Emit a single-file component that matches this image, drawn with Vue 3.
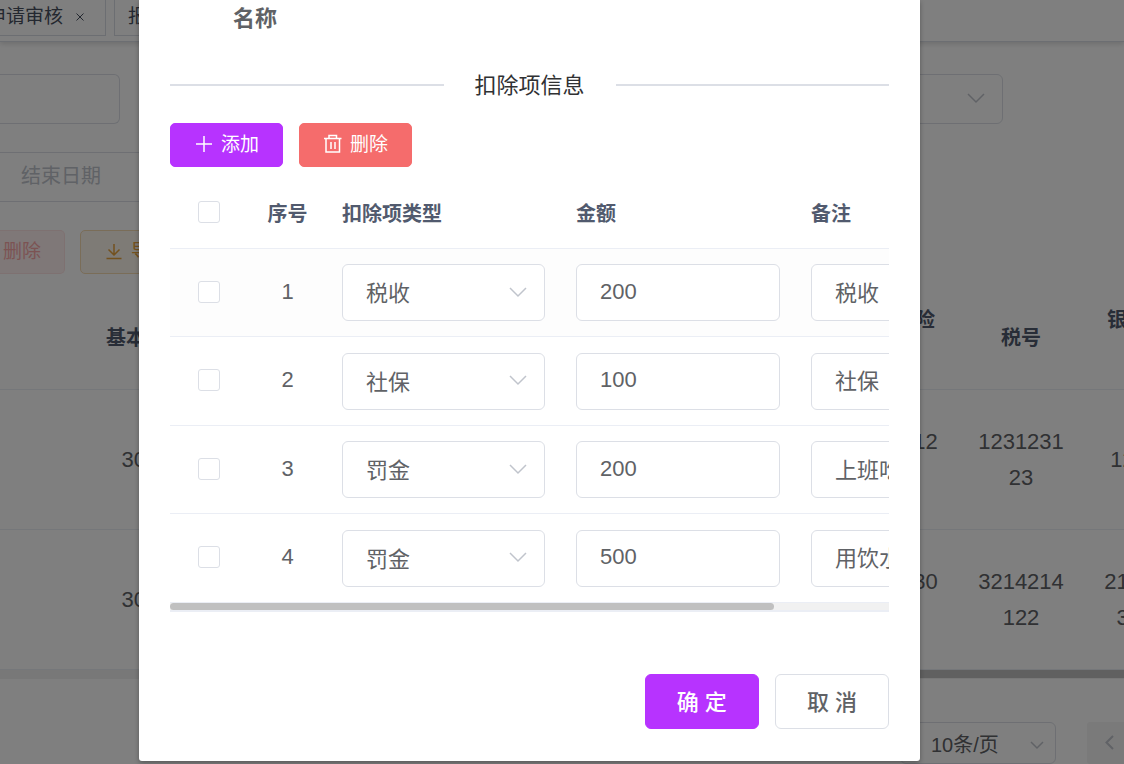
<script setup>
import { ref } from 'vue'

const typeOptions = ['税收', '社保', '罚金']

const deductions = ref([
  { id: 1, type: '税收', amount: '200', remark: '税收', checked: false },
  { id: 2, type: '社保', amount: '100', remark: '社保', checked: false },
  { id: 3, type: '罚金', amount: '200', remark: '上班吃饭', checked: false },
  { id: 4, type: '罚金', amount: '500', remark: '用饮水机', checked: false }
])
const allChecked = ref(false)

const payrolls = [
  { base: '3000', insurance: ['1231212', '312'], tax: ['1231231', '23'], bank: ['123123'] },
  { base: '3000', insurance: ['3214230', '142'], tax: ['3214214', '122'], bank: ['2142134', '32144'] }
]

function toggleAll() {
  deductions.value.forEach((row) => { row.checked = allChecked.value })
}
</script>

<template>
  <div class="page">
    <header class="tabs">
      <div class="tab-clip">
        <a class="tab" href="#"><span>申请审核</span>
          <svg class="close" viewBox="0 0 10 10"><path d="M1.500 1.500l7 7M8.500 1.500l-7 7" /></svg>
        </a>
      </div>
      <a class="tab" href="#"><span>报销审核</span></a>
    </header>

    <main class="content">
      <div class="filters">
        <input class="field short" type="text" aria-label="关键字">
        <div class="select-box wide">
          <select class="field" aria-label="状态"><option></option></select>
          <svg class="arrow" viewBox="0 0 20 20"><path d="M2 6l8 8 8-8" /></svg>
        </div>
      </div>
      <div class="filters dates">
        <input class="field date" type="text" placeholder="结束日期" aria-label="结束日期">
      </div>
      <div class="tools">
        <button class="btn plain-danger" type="button">删除</button>
        <button class="btn plain-warning" type="button">
          <svg class="icon" viewBox="0 0 20 20"><path d="M10 3v11M4.500 8.500l5.500 5.500 5.500-5.500M2.500 17.500h15" /></svg>
          <span>导出</span>
        </button>
      </div>

      <div class="grid-wrap">
        <table class="grid">
          <colgroup>
            <col class="c-lead"><col class="c-cell"><col><col class="c-cell"><col class="c-cell"><col class="c-cell">
          </colgroup>
          <thead>
            <tr><th></th><th>基本工资</th><th></th><th>社会保险<br>账号</th><th>税号</th><th>银行卡号<br>信息</th></tr>
          </thead>
          <tbody>
            <tr v-for="(p, i) in payrolls" :key="i">
              <td></td>
              <td>{{ p.base }}</td>
              <td></td>
              <td><div v-for="t in p.insurance" :key="t">{{ t }}</div></td>
              <td><div v-for="t in p.tax" :key="t">{{ t }}</div></td>
              <td><div v-for="t in p.bank" :key="t">{{ t }}</div></td>
            </tr>
          </tbody>
        </table>
        <div class="grid-scroll"><div class="grid-thumb"></div></div>
      </div>

      <div class="pager">
        <div class="select-box size">
          <select class="field" aria-label="每页条数"><option>10条/页</option></select>
          <svg class="arrow" viewBox="0 0 20 20"><path d="M4 7l6 6 6-6" /></svg>
        </div>
        <button class="prev" type="button" aria-label="上一页">
          <svg viewBox="0 0 20 20"><path d="M13 3l-6.500 6.500L13 16" /></svg>
        </button>
      </div>
    </main>

    <div class="overlay">
      <section class="dialog" role="dialog" aria-label="扣除项信息">
        <div class="label">名称</div>
        <h2 class="divider"><span>扣除项信息</span></h2>

        <div class="actions">
          <button class="btn primary" type="button">
            <svg class="icon" viewBox="0 0 20 20"><path d="M10 2v16M2 10h16" /></svg>
            <span>添加</span>
          </button>
          <button class="btn danger" type="button">
            <svg class="icon" viewBox="0 0 20 20"><path d="M1 4.500h17.500M6 4.500v-3h7.500v3M3 4.500v13.500h13.500V4.500M8 8v7M12 8v7" /></svg>
            <span>删除</span>
          </button>
        </div>

        <div class="items-wrap">
          <table class="items">
            <colgroup>
              <col class="i-check"><col class="i-index"><col class="i-type"><col class="i-wide"><col class="i-wide">
            </colgroup>
            <thead>
              <tr>
                <th class="mid"><input v-model="allChecked" class="check" type="checkbox" aria-label="全选" @change="toggleAll"></th>
                <th class="mid">序号</th>
                <th>扣除项类型</th>
                <th>金额</th>
                <th>备注</th>
              </tr>
            </thead>
            <tbody>
              <tr v-for="row in deductions" :key="row.id">
                <td class="mid"><input v-model="row.checked" class="check" type="checkbox" :aria-label="'选择 ' + row.id"></td>
                <td class="mid">{{ row.id }}</td>
                <td>
                  <div class="select-box">
                    <select v-model="row.type" class="field tall choice" aria-label="扣除项类型">
                      <option v-for="o in typeOptions" :key="o">{{ o }}</option>
                    </select>
                    <svg class="arrow" viewBox="0 0 20 20"><path d="M2 6l8 8 8-8" /></svg>
                  </div>
                </td>
                <td><input v-model="row.amount" class="field tall" type="text" aria-label="金额"></td>
                <td><input v-model="row.remark" class="field tall remark" type="text" aria-label="备注"></td>
              </tr>
            </tbody>
          </table>
        </div>
        <div class="scroll"><div class="thumb"></div></div>

        <footer class="foot">
          <button class="big primary" type="button">确 定</button>
          <button class="big" type="button">取 消</button>
        </footer>
      </section>
    </div>
  </div>
</template>

<style>
body {
  margin: 0;
  background: #fff;
}
</style>

<style scoped>
.page,
.page * {
  box-sizing: border-box;
}

.page {
  position: relative;
  height: 100vh;
  overflow: hidden;
  background: #fff;
  color: #606266;
  font-family: "Liberation Sans", "Noto Sans CJK SC", sans-serif;
  font-size: 22px;
  line-height: 36px;
}

button,
input,
select {
  margin: 0;
  font-family: inherit;
  font-size: inherit;
  color: inherit;
}

svg {
  fill: none;
  stroke: currentColor;
}

/* tabs */
.tabs {
  display: flex;
  gap: 8px;
  height: 42px;
  border-bottom: 1px solid #d8dce5;
  box-shadow: 0 2px 5px rgba(0, 0, 0, 0.14);
}

.tab-clip {
  display: flex;
  justify-content: flex-end;
  width: 106px;
  height: 36px;
  overflow: hidden;
}

.tab {
  display: flex;
  flex: none;
  align-items: center;
  gap: 12px;
  height: 36px;
  padding: 0 20px 2px 13px;
  border: 1px solid #d8dce5;
  border-top: 0;
  color: #495060;
  font-size: 19px;
  line-height: 32px;
  text-decoration: none;
}

.close {
  width: 10px;
  height: 10px;
}

/* filters */
.content {
  padding-top: 32px;
}

.filters {
  display: flex;
  justify-content: space-between;
  padding-right: 121px;
}

.dates {
  margin-top: 28px;
}

.field {
  display: block;
  width: 100%;
  height: 50px;
  padding: 0 23px;
  border: 1px solid #dcdfe6;
  border-radius: 6px;
  outline: none;
  background: #fff;
  appearance: none;
}

.field.short {
  width: 120px;
  border-left: 0;
  border-radius: 0 6px 6px 0;
}

.field.date {
  width: 300px;
  padding: 0 0 2px 21px;
  border-left: 0;
  border-radius: 0 6px 6px 0;
  font-size: 20px;
}

.field.date::placeholder {
  color: #c0c4cc;
  opacity: 1;
}

.select-box {
  position: relative;
}

.select-box.wide {
  width: 340px;
}

.arrow {
  position: absolute;
  top: 50%;
  right: 17px;
  width: 20px;
  height: 20px;
  margin-top: -11px;
  color: #c0c4cc;
  stroke-width: 1.5;
  pointer-events: none;
}

/* buttons */
.tools {
  display: flex;
  gap: 15px;
  margin-top: 28px;
}

.btn {
  display: flex;
  align-items: center;
  gap: 7px;
  height: 44px;
  padding: 0 23px;
  border: 1px solid transparent;
  border-radius: 5px;
  font-size: 19px;
  line-height: 24px;
}

.icon {
  width: 20px;
  height: 20px;
  margin-bottom: 2px;
  stroke-width: 1.5;
}

.plain-danger {
  padding-left: 3px;
  border-color: #fde2e2;
  border-left: 0;
  border-radius: 0 5px 5px 0;
  background: #fef0f0;
  color: #f9a7a7;
}

.plain-warning {
  border-color: #f5dab1;
  background: #fdf6ec;
  color: #e6a23c;
}

.primary {
  border-color: #b733ff;
  background: #b733ff;
  color: #fff;
}

.danger {
  border-color: #f56c6c;
  background: #f56c6c;
  color: #fff;
}

/* payroll table */
.grid-wrap {
  margin-top: 11px;
  overflow: hidden;
}

.grid {
  width: calc(100% + 86px);
  border-collapse: separate;
  border-spacing: 0;
  table-layout: fixed;
  text-align: center;
}

.c-lead {
  width: 83px;
}

.c-cell {
  width: 126px;
}

.grid th {
  height: 105px;
  padding: 2px 0 0;
  border-bottom: 1px solid #ebeef5;
  color: #515a6e;
  font-size: 20px;
}

.grid td {
  height: 140px;
  padding: 0;
  border-bottom: 1px solid #ebeef5;
}

.grid-scroll {
  height: 9px;
  background: #f1f1f1;
}

.grid-thumb {
  width: 60%;
  height: 8px;
  margin-left: auto;
  background: #c0c0c0;
}

/* pager */
.pager {
  display: flex;
  justify-content: flex-end;
  gap: 31px;
  height: 42px;
  margin-top: 43px;
}

.size {
  width: 156px;
}

.size .field {
  height: 42px;
  padding: 3px 23px 0 30px;
  font-size: 20px;
}

.size .arrow {
  right: 9px;
  margin-top: -8px;
}

.size .arrow,
.prev svg {
  width: 20px;
  height: 20px;
}

.prev {
  width: 37px;
  height: 42px;
  padding: 0 0 0 13px;
  border: 0;
  border-radius: 3px 0 0 3px;
  background: #f4f4f5;
  color: #c0c4cc;
  text-align: left;
}

.prev svg {
  display: block;
  stroke-width: 2;
}

/* dialog */
.overlay {
  position: absolute;
  inset: 0;
  padding: 0 204px 0 139px;
  background: rgba(0, 0, 0, 0.5);
}

.dialog {
  padding: 0 31px 32px;
  border-radius: 0 0 3px 3px;
  background: #fff;
  box-shadow: 0 2px 5px rgba(0, 0, 0, 0.3);
}

.label {
  padding: 1px 0 0 63px;
  font-weight: 700;
}

.divider {
  display: flex;
  align-items: center;
  gap: 31px;
  margin: 30px 0 20px;
  color: #303133;
  font-size: 22px;
  font-weight: 400;
}

.divider span {
  padding-top: 2px;
  line-height: 34px;
}

.divider::before,
.divider::after {
  flex: 1;
  height: 2px;
  background: #dcdfe6;
  content: "";
}

.actions {
  display: flex;
  gap: 16px;
}

.items-wrap {
  margin-top: 11px;
  overflow: hidden;
}

.items {
  width: 861px;
  border-collapse: separate;
  border-spacing: 0;
  table-layout: fixed;
}

.i-check {
  width: 78px;
}

.i-index {
  width: 79px;
}

.i-type {
  width: 234px;
}

.i-wide {
  width: 235px;
}

.items th,
.items td {
  padding: 0 16px 0 15px;
  border-bottom: 1px solid #ebeef5;
  text-align: left;
}

.items th {
  height: 71px;
  padding-top: 2px;
  color: #515a6e;
  font-size: 20px;
}

.items td {
  height: 88px;
}

.items tr:nth-child(even) td {
  height: 89px;
}

.items tbody tr:first-child td {
  background: #fdfdfd;
}

.items .mid {
  padding-right: 0;
  padding-left: 0;
  text-align: center;
}

.items td.mid,
.items th.mid:first-child {
  padding-top: 0;
  padding-bottom: 2px;
}

.check {
  display: block;
  width: 22px;
  height: 22px;
  margin: 0 auto;
  border: 1px solid #dcdfe6;
  border-radius: 3px;
  background: #fff;
  appearance: none;
}

.check:checked {
  border-color: #b733ff;
  background: #b733ff;
}

.tall {
  height: 57px;
  padding-bottom: 2px;
}

.choice {
  padding-top: 2px;
  padding-bottom: 0;
}

.remark {
  padding-bottom: 4px;
}

.scroll {
  height: 9px;
  border-bottom: 2px solid #ebeef5;
  background: #f1f1f1;
}

.thumb {
  width: 84%;
  height: 7px;
  border-radius: 4px;
  background: #c0c0c0;
}

.foot {
  display: flex;
  justify-content: flex-end;
  gap: 16px;
  margin-top: 62px;
}

.big {
  height: 55px;
  padding: 0 31px 4px;
  border: 1px solid #dcdfe6;
  border-radius: 6px;
  background: #fff;
  font-size: 22px;
  font-weight: 500;
}

.big.primary {
  border-color: #b733ff;
  background: #b733ff;
  color: #fff;
}
</style>
